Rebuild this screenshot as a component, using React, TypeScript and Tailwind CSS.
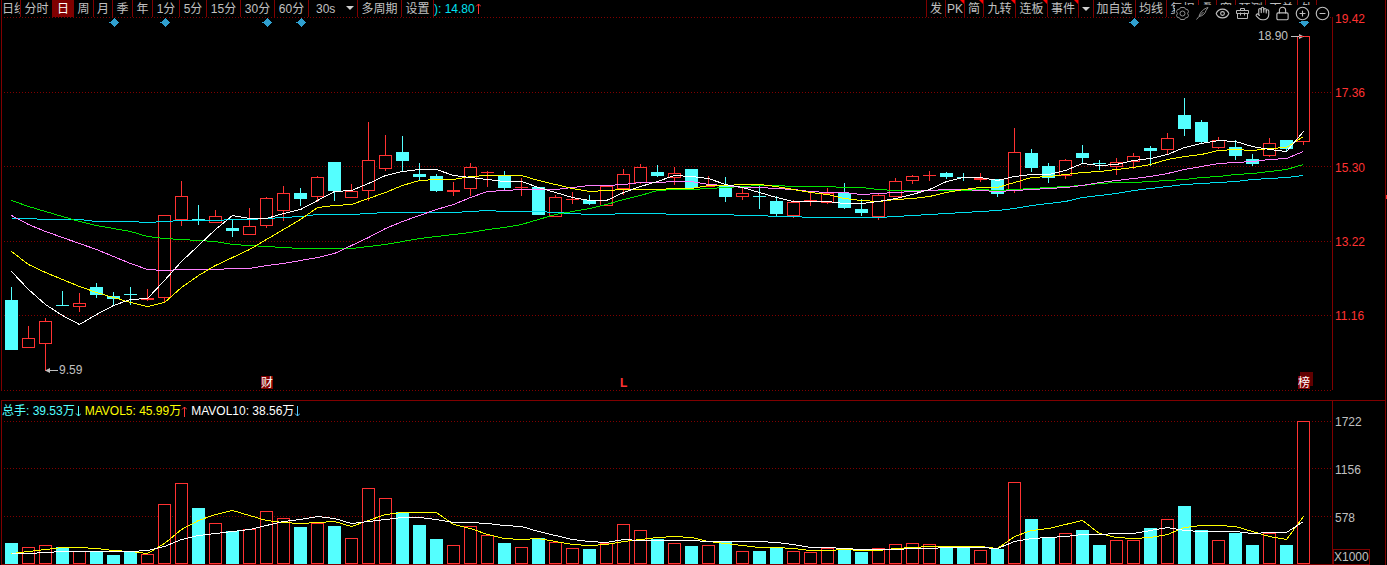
import React from "react";
import { CircleMinus, CirclePlus, Eye, Hand, Lock } from "lucide-react";

const RED = "#ff3232";
const CYAN = "#54ffff";
const LINE = "#800000";

const STEP = 17;
const FIRST_X = 11;

type Candle = [kind: "u" | "d", high: number, top: number, bottom: number, low: number];

// u = rising (hollow red), d = falling (solid cyan); values are chart y positions
const CANDLES: Candle[] = [
  ["d", 287, 300, 350, 350], ["u", 326, 338, 348, 348], ["u", 318, 321, 344, 371], ["d", 291, 305, 306, 306],
  ["u", 293, 303, 307, 312], ["d", 283, 287, 295, 298], ["d", 292, 296, 299, 305], ["d", 287, 294, 295, 305],
  ["u", 289, 298, 300, 301], ["u", 215, 215, 298, 302], ["u", 181, 196, 220, 226], ["d", 205, 219, 220, 225],
  ["u", 210, 216, 223, 223], ["d", 220, 228, 231, 237], ["u", 208, 226, 235, 235], ["u", 197, 198, 226, 228],
  ["u", 186, 193, 211, 221], ["d", 188, 193, 199, 206], ["u", 176, 177, 197, 202], ["d", 162, 162, 191, 201],
  ["u", 184, 191, 198, 198], ["u", 122, 160, 191, 201], ["u", 135, 155, 169, 171], ["d", 136, 152, 161, 171],
  ["d", 163, 174, 177, 180], ["d", 174, 176, 191, 192], ["u", 182, 190, 192, 196], ["u", 163, 167, 189, 196],
  ["u", 171, 172, 173, 187], ["d", 171, 175, 188, 190], ["u", 178, 187, 188, 196], ["d", 187, 187, 215, 215],
  ["u", 195, 197, 217, 217], ["u", 192, 199, 200, 204], ["d", 195, 200, 204, 205], ["u", 186, 186, 206, 206],
  ["u", 169, 174, 189, 195], ["u", 164, 167, 183, 184], ["d", 165, 172, 176, 177], ["u", 167, 173, 178, 185],
  ["d", 169, 169, 188, 188], ["u", 176, 186, 187, 187], ["d", 177, 186, 197, 202], ["u", 188, 193, 197, 200],
  ["d", 186, 196, 197, 209], ["d", 196, 201, 214, 216], ["u", 200, 202, 216, 218], ["u", 192, 200, 201, 206],
  ["u", 188, 193, 203, 204], ["d", 183, 193, 208, 209], ["d", 199, 209, 213, 216], ["u", 193, 195, 217, 220],
  ["u", 178, 181, 197, 197], ["u", 175, 176, 181, 184], ["u", 171, 175, 176, 181], ["d", 172, 173, 177, 179],
  ["d", 173, 177, 178, 181], ["u", 173, 178, 180, 182], ["d", 179, 179, 194, 197], ["u", 128, 152, 190, 193],
  ["d", 149, 153, 168, 172], ["d", 163, 166, 178, 183], ["u", 159, 160, 176, 179], ["d", 145, 153, 158, 163],
  ["d", 160, 163, 164, 170], ["u", 158, 162, 167, 175], ["u", 153, 156, 162, 169], ["d", 146, 148, 151, 166],
  ["u", 133, 138, 150, 154], ["d", 98, 115, 129, 136], ["d", 120, 122, 142, 144], ["u", 137, 140, 148, 149],
  ["d", 140, 147, 156, 160], ["d", 154, 159, 164, 166], ["u", 138, 143, 156, 157], ["d", 140, 140, 149, 151],
  ["u", 36, 36, 142, 145],
];

const MA_LINES = [
  {
    color: "#00e0f0",
    ys: [
      218, 218, 219, 219, 219, 221, 221, 221, 222, 221, 220, 220, 220, 219, 219, 218, 217, 216, 214, 214,
      214, 213, 212, 212, 212, 212, 212, 211, 210, 211, 211, 211, 212, 213, 214, 214, 213, 213, 213, 214,
      214, 214, 214, 215, 215, 216, 216, 217, 217, 217, 217, 217, 216, 215, 214, 213, 212, 211, 210, 208,
      205, 203, 201, 197, 195, 193, 190, 188, 186, 184, 183, 182, 181, 179, 178, 177, 175,
    ],
  },
  {
    color: "#00e600",
    ys: [
      200, 206, 211, 216, 221, 225, 228, 231, 236, 238, 239, 240, 241, 244, 245, 246, 247, 248, 248, 248,
      248, 246, 244, 241, 238, 236, 234, 232, 229, 227, 224, 219, 214, 211, 208, 204, 199, 195, 190, 189,
      189, 188, 187, 186, 185, 185, 186, 186, 186, 187, 187, 189, 190, 190, 190, 190, 190, 189, 190, 189,
      188, 187, 186, 185, 183, 182, 182, 181, 180, 179, 177, 176, 174, 173, 171, 169, 164,
    ],
  },
  {
    color: "#ff80ff",
    ys: [
      215, 224, 231, 237, 243, 249, 256, 263, 269, 270, 269, 269, 269, 268, 268, 265, 263, 260, 257, 253,
      245, 237, 228, 221, 215, 209, 204, 197, 191, 190, 189, 189, 189, 187, 185, 185, 184, 182, 182, 181,
      181, 184, 185, 187, 187, 188, 189, 191, 192, 192, 194, 193, 192, 191, 190, 189, 189, 190, 191, 190,
      189, 188, 187, 185, 182, 180, 178, 176, 173, 169, 166, 163, 162, 161, 159, 158, 151,
    ],
  },
  {
    color: "#ffff00",
    ys: [
      251, 264, 272, 279, 286, 292, 297, 302, 306, 302, 287, 275, 265, 257, 249, 239, 229, 219, 207, 205,
      204, 198, 192, 185, 180, 179, 179, 176, 175, 175, 175, 180, 184, 188, 191, 190, 189, 189, 189, 188,
      188, 185, 185, 184, 184, 186, 189, 192, 194, 198, 200, 201, 199, 198, 196, 192, 189, 187, 187, 182,
      177, 176, 174, 172, 171, 169, 167, 164, 159, 156, 154, 150, 149, 150, 148, 147, 136,
    ],
  },
  {
    color: "#ffffff",
    ys: [
      271, 289, 304, 315, 324, 314, 305, 299, 298, 280, 261, 245, 229, 215, 218, 218, 213, 209, 200, 191,
      190, 183, 175, 171, 169, 169, 175, 177, 179, 181, 181, 187, 192, 197, 200, 200, 192, 186, 181, 175,
      176, 178, 184, 187, 192, 197, 201, 201, 201, 203, 203, 201, 198, 194, 189, 181, 177, 177, 180, 176,
      174, 174, 170, 163, 165, 164, 160, 158, 154, 147, 143, 140, 141, 146, 149, 151, 131,
    ],
  },
];

const VOLUME_TOPS = [
  543, 547, 545, 547, 551, 552, 555, 552, 554, 504, 483, 508, 523, 531, 529, 511, 518, 527, 523, 526,
  538, 488, 498, 512, 525, 539, 545, 526, 535, 543, 547, 538, 542, 548, 549, 543, 524, 530, 539, 543,
  546, 545, 542, 551, 551, 548, 551, 552, 548, 549, 552, 548, 544, 543, 544, 548, 548, 550, 549, 482,
  519, 537, 533, 530, 545, 540, 540, 528, 519, 506, 530, 540, 533, 545, 533, 545, 421,
];

const VOLUME_LINES = [
  {
    color: "#ffff00",
    ys: [
      553, 551, 549, 547, 547, 548, 550, 551, 553, 543, 529, 520, 514, 510, 515, 520, 522, 523, 522, 521,
      526, 520, 514, 512, 512, 512, 524, 528, 534, 538, 539, 538, 541, 544, 545, 544, 541, 539, 537, 536,
      537, 541, 543, 545, 547, 547, 548, 550, 550, 549, 550, 550, 548, 547, 546, 546, 546, 546, 548, 536,
      530, 528, 524, 520, 533, 537, 538, 537, 534, 527, 525, 525, 526, 531, 536, 539, 516,
    ],
  },
  {
    color: "#ffffff",
    ys: [
      553, 553, 552, 551, 551, 551, 551, 551, 550, 546, 539, 535, 533, 531, 529, 525, 521, 519, 516, 518,
      523, 521, 519, 517, 517, 519, 522, 522, 523, 525, 526, 531, 535, 539, 541, 542, 539, 540, 540, 540,
      540, 541, 541, 541, 541, 542, 544, 547, 547, 548, 549, 549, 549, 548, 548, 547, 547, 547, 548, 541,
      538, 537, 536, 534, 534, 533, 533, 530, 527, 530, 531, 531, 531, 533, 532, 532, 521,
    ],
  },
];

const candleX = (i: number) => FIRST_X + i * STEP;

const toPoints = (ys: number[]) =>
  ys.map((y, i) => `${candleX(i) + 0.5},${y + 0.5}`).join(" ");

const Dotted = ({ y }: { y: number }) => (
  <line x1={4} x2={1332} y1={y + 0.5} y2={y + 0.5} stroke={LINE} strokeDasharray="1 2" />
);

const Body = ({ x, top, bottom, up }: { x: number; top: number; bottom: number; up: boolean }) =>
  up && bottom - top > 2 ? (
    <rect x={x - 5.5} y={top + 0.5} width={12} height={bottom - top - 1} fill="#000" stroke={RED} />
  ) : (
    <rect x={x - 6} y={top} width={13} height={bottom - top} fill={up ? RED : CYAN} />
  );

const Lines = ({ lines }: { lines: { color: string; ys: number[] }[] }) => (
  <>
    {lines.map((line) => (
      <polyline key={line.color} points={toPoints(line.ys)} fill="none" stroke={line.color} />
    ))}
  </>
);

const PriceChart = () => (
  <svg viewBox="0 17 1333 383" className="block h-auto w-full" shapeRendering="crispEdges" role="img" aria-label="日K线">
    {[17, 92, 166, 241, 315, 390].map((y) => (
      <Dotted key={y} y={y} />
    ))}
    <path d="M1.5 17V391M1332.5 17V390" stroke={LINE} />

    {CANDLES.map(([kind, high, top, bottom, low], i) => {
      const x = candleX(i);
      return (
        <g key={i}>
          <rect x={x} y={high} width={1} height={low - high} fill={kind === "u" ? RED : CYAN} />
          <Body x={x} top={top} bottom={bottom} up={kind === "u"} />
        </g>
      );
    })}
    <Lines lines={MA_LINES} />

    {[114, 165, 267, 301, 1134, 1304].map((x) => (
      <path key={x} d={`M${x + 0.5} 18l5 4.5l-5 4.5l-5-4.5z`} fill="#2f9fcf" />
    ))}

    <g fill="#c0c0c0" fontSize={12} shapeRendering="auto" className="font-['Liberation_Sans',sans-serif]">
      <path d="M46 370h12v1h-12zM45 370.5l5-2.500v5z" />
      <text x={59} y={374}>9.59</text>
      <path d="M1291 36h12v1h-12zM1304 36.5l-5-2.500v5z" />
      <text x={1258} y={40}>18.90</text>
    </g>

    <g fontSize={12} fill="#fff" className="font-['Noto_Sans_CJK_SC',sans-serif]">
      <rect x={261} y={376} width={12} height={13} fill={LINE} />
      <text x={261} y={387}>财</text>
      <rect x={1300} y={372} width={13} height={14} fill="#600000" />
      <rect x={1298} y={376} width={12} height={13} fill={LINE} />
      <text x={1298} y={387}>榜</text>
    </g>
    <text x={620} y={387} fontSize={12} fill={RED} className="font-['Liberation_Sans',sans-serif] font-bold">L</text>
  </svg>
);

const VolumeChart = () => (
  <svg viewBox="0 421 1333 144" className="block h-auto w-full" shapeRendering="crispEdges" role="img" aria-label="成交量">
    {[421, 468, 516].map((y) => (
      <Dotted key={y} y={y} />
    ))}
    {VOLUME_TOPS.map((top, i) => (
      <Body key={i} x={candleX(i)} top={top} bottom={564} up={CANDLES[i][0] === "u"} />
    ))}
    <Lines lines={VOLUME_LINES} />
    <path d="M1.5 421V565M1332.5 421V565M1 564.5H1333" stroke={LINE} fill="none" />
  </svg>
);

interface ToolButtonProps {
  children: React.ReactNode;
  width: string;
  active?: boolean;
  flagged?: boolean;
  clipped?: boolean;
  label?: string;
}

const ToolButton: React.FC<ToolButtonProps> = ({ children, width, active, flagged, clipped, label }) => (
  <button
    type="button"
    aria-label={label}
    className={`relative flex h-full shrink-0 items-center overflow-hidden border-r border-[#800000] whitespace-nowrap ${width} ${
      clipped ? "justify-start" : "justify-center"
    } ${active ? "bg-[#800000] text-white" : ""}`}
  >
    {children}
    {flagged && (
      <svg viewBox="0 0 4 4" className="absolute top-0 right-0 size-1">
        <path d="M0 0h4v4z" fill="#f00" />
      </svg>
    )}
  </button>
);

const Caret = () => (
  <svg viewBox="0 0 8 4" width={8} height={4} className="block">
    <path d="M0 0h8l-4 4z" fill="#d0d0d0" />
  </svg>
);

const TrendArrow = ({ up, color }: { up?: boolean; color: string }) => (
  <svg viewBox="0 0 6 11" width={6} height={11} fill="none" stroke={color} role="img" aria-label={up ? "升" : "降"}>
    <path d={up ? "M3.5 11V1M1 3.500l2.500-2.500l2.500 2.500" : "M3.500 0v10M1 7.500l2.500 2.500l2.500-2.500"} />
  </svg>
);

const GearIcon = () => (
  <svg viewBox="0 0 15 15" width={15} height={15} fill="none" stroke="#909090">
    <path d="M5.5 1.5h4l1 1.7 2 .3 1 2-.9 2 .9 2-1 2-2 .3-1 1.7h-4l-1-1.7-2-.3-1-2 .9-2-.9-2 1-2 2-.3z" />
    <circle cx="7.5" cy="7.5" r="2.5" />
  </svg>
);

const BrushIcon = () => (
  <svg viewBox="0 0 15 15" width={15} height={15} fill="none" stroke="#909090">
    <path d="M13 1.5C9 2.500 5 6 4 10.500C8 10 10.500 7 11 4.500zM4 10.500L1.500 13.500M4.500 10L8.500 6" />
  </svg>
);

const ToolboxIcon = () => (
  <svg viewBox="0 0 15 15" width={15} height={15} fill="none" stroke="#b8b8b8">
    <path d="M1.500 4.500h12v3h-12zM2.500 7.500v5h10v-5M5.500 4.500v-2h4v2M5.500 6.500v3M9.500 6.500v3" />
  </svg>
);

const ICON_TOOLS = [
  { name: "设置", icon: <GearIcon /> },
  { name: "画笔", icon: <BrushIcon /> },
  { name: "显示", icon: <Eye size={15} strokeWidth={1.8} /> },
  { name: "工具箱", icon: <ToolboxIcon /> },
  { name: "拖动", icon: <Hand size={15} strokeWidth={1.8} /> },
  { name: "锁定", icon: <Lock size={15} strokeWidth={1.8} /> },
  { name: "放大", icon: <CirclePlus size={15} strokeWidth={1.8} /> },
  { name: "缩小", icon: <CircleMinus size={15} strokeWidth={1.8} /> },
];

const Toolbar = () => (
  <div className="relative flex h-[17px] text-[#c0c0c0]">
    <nav className="ml-px flex h-full shrink-0 border-l border-[#800000]">
      <ToolButton width="w-[19px]" clipped>日线</ToolButton>
      <ToolButton width="w-8">分时</ToolButton>
      <ToolButton width="w-[21px]" active>日</ToolButton>
      <ToolButton width="w-5">周</ToolButton>
      <ToolButton width="w-[19px]">月</ToolButton>
      <ToolButton width="w-5">季</ToolButton>
      <ToolButton width="w-5">年</ToolButton>
      <ToolButton width="w-[27px]">1分</ToolButton>
      <ToolButton width="w-[27px]">5分</ToolButton>
      <ToolButton width="w-[34px]">15分</ToolButton>
      <ToolButton width="w-[34px]">30分</ToolButton>
      <ToolButton width="w-[34px]">60分</ToolButton>
      <label className="relative h-full w-[49px] shrink-0 border-r border-[#800000]">
        <select aria-label="秒周期" defaultValue="30s" className="block h-full w-full appearance-none bg-black pt-px pl-[7px]">
          <option>30s</option>
        </select>
        <span className="pointer-events-none absolute top-1.5 right-[3px]">
          <Caret />
        </span>
      </label>
      <ToolButton width="w-11">多周期</ToolButton>
      <ToolButton width="w-8">设置</ToolButton>
    </nav>
    <div className="flex h-full shrink-0 items-center whitespace-pre text-[#00e0f0]">
      ): 14.80
      <TrendArrow up color={RED} />
    </div>
    <div className="flex-1" />
    <nav className="flex h-full shrink-0 border-l border-[#800000]">
      <ToolButton width="w-[19px]">发</ToolButton>
      <ToolButton width="w-[19px]" flagged>PK</ToolButton>
      <ToolButton width="w-[19px]" flagged>简</ToolButton>
      <ToolButton width="w-8" flagged>九转</ToolButton>
      <ToolButton width="w-8" flagged>连板</ToolButton>
      <ToolButton width="w-[31px]" flagged>事件</ToolButton>
      <ToolButton width="w-[15px]" label="更多">
        <Caret />
      </ToolButton>
      <ToolButton width="w-[42px]">加自选</ToolButton>
      <ToolButton width="w-[31px]">均线</ToolButton>
      <ToolButton width="w-8">复权</ToolButton>
      <ToolButton width="w-[18px]">叠</ToolButton>
      <ToolButton width="w-[19px]">窗</ToolButton>
      <ToolButton width="w-[30px]">预测</ToolButton>
      <ToolButton width="w-8">下单</ToolButton>
      <ToolButton width="w-[19px]">外</ToolButton>
      <div className="w-4" />
    </nav>
    <div className="absolute top-[5px] right-[3px] flex h-4 items-center gap-[5px] bg-black text-[#c0c0c0]">
      {ICON_TOOLS.map((tool) => (
        <button key={tool.name} type="button" aria-label={tool.name}>
          {tool.icon}
        </button>
      ))}
    </div>
  </div>
);

const App: React.FC = () => {
  return (
    <main className="flex bg-black font-['Liberation_Sans','Noto_Sans_CJK_SC',sans-serif] text-[12px] leading-[12px]">
      <div className="min-w-0 flex-1">
        <section className="flex">
          <div className="min-w-0 flex-1">
            <Toolbar />
            <PriceChart />
          </div>
          <div className="flex w-[53px] shrink-0 flex-col justify-between border-r border-[#800000] pt-[13px] pb-[78px] pl-0.5 text-[#ff3232]">
            {["19.42", "17.36", "15.30", "13.22", "11.16"].map((price) => (
              <span key={price}>{price}</span>
            ))}
          </div>
        </section>

        <section className="flex">
          <div className="min-w-0 flex-1">
            <div className="ml-px flex h-[21px] items-center gap-1 border-x border-t border-[#800000] whitespace-pre">
              <span className="flex items-center text-[#54ffff]">
                总手: 39.53万
                <TrendArrow color={CYAN} />
              </span>
              <span className="flex items-center text-[#ffff00]">
                MAVOL5: 45.99万
                <TrendArrow up color={RED} />
              </span>
              <span className="flex items-center text-white">
                MAVOL10: 38.56万
                <TrendArrow color="#54c8ff" />
              </span>
            </div>
            <VolumeChart />
          </div>
          <div className="flex w-[53px] shrink-0 flex-col items-start justify-between border-t border-r border-[#800000] pt-[15px] text-[#c0c0c0]">
            <div className="flex flex-col gap-9 pl-0.5">
              <span>1722</span>
              <span>1156</span>
              <span>578</span>
            </div>
            <span className="border border-[#800000] py-px">X1000</span>
          </div>
        </section>
      </div>
      {/* edge of the neighbouring panel */}
      <div className="w-px pt-[195px]">
        <div className="h-1 bg-[#ff3232]" />
      </div>
    </main>
  );
};

export default App;
